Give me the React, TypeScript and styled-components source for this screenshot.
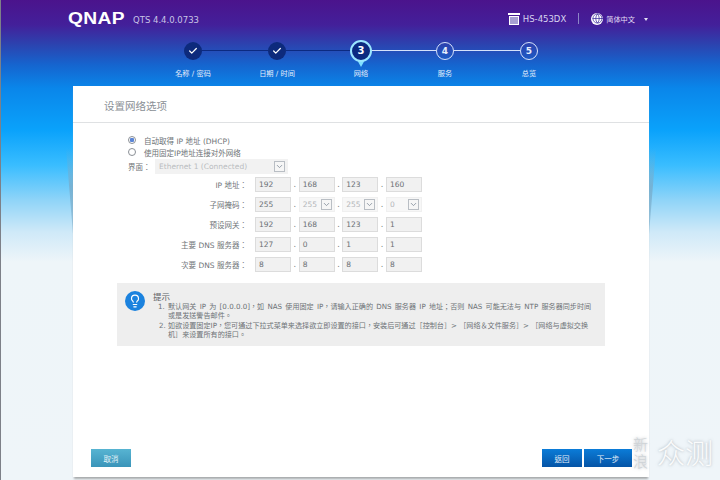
import React from 'react';
import styled, { createGlobalStyle } from 'styled-components';
import { Check, ChevronDown, Globe, Lightbulb } from 'lucide-react';

const UI_FONT = `'DejaVu Sans', 'Noto Sans CJK TC', sans-serif`;

const GlobalStyle = createGlobalStyle`
  html, body {
    margin: 0;
    padding: 0;
  }
  body {
    font-family: ${UI_FONT};
    background: #eff5f9;
  }
`;

type Octet = { value: string; select?: boolean };
type AddressRow = { label: string; octets: Octet[] };

const plain = (...values: string[]): Octet[] => values.map(value => ({ value }));

const ADDRESS_ROWS: AddressRow[] = [
  { label: 'IP 地址：', octets: plain('192', '168', '123', '160') },
  {
    label: '子网掩码：',
    octets: [
      { value: '255' },
      { value: '255', select: true },
      { value: '255', select: true },
      { value: '0', select: true },
    ],
  },
  { label: '预设网关：', octets: plain('192', '168', '123', '1') },
  { label: '主要 DNS 服务器：', octets: plain('127', '0', '1', '1') },
  { label: '次要 DNS 服务器：', octets: plain('8', '8', '8', '8') },
];

const STEPS = [
  { label: '名称 / 密码', state: 'done' },
  { label: '日期 / 时间', state: 'done' },
  { label: '网络', state: 'active' },
  { label: '服务', state: 'todo' },
  { label: '总览', state: 'todo' },
] as const;

type StepState = (typeof STEPS)[number]['state'];

const App = () => {
  return (
    <>
      <GlobalStyle />
      <Page>
        <TopBar>
          <Brand>
            <Logo>QNAP</Logo>
            <Version>QTS 4.4.0.0733</Version>
          </Brand>
          <TopRight>
            <NasIcon viewBox="0 0 12 12">
              <rect x="0" y="0" width="12" height="2" fill="#fff" />
              <path d="M1 3h10v9H1z" fill="#fff" />
              <path d="M3 4v7M5 4v7M7 4v7M9 4v7" stroke="#3a2a9c" strokeWidth="0.9" />
            </NasIcon>
            <Model>HS-453DX</Model>
            <Divider />
            <GlobeBadge>
              <Globe size={11} color="#3a2a9c" strokeWidth={1.6} />
            </GlobeBadge>
            <Language>简体中文</Language>
            <Caret />
          </TopRight>
        </TopBar>

        <Stepper>
          {STEPS.map((step, index) => (
            <Step key={step.label}>
              {index > 0 && <Connector $state={step.state} />}
              <StepSlot>
                {step.state === 'done' && (
                  <DoneDot>
                    <Check size={10} color="#fff" strokeWidth={3} />
                  </DoneDot>
                )}
                {step.state === 'active' && (
                  <ActivePin>
                    <ActiveDot>{index + 1}</ActiveDot>
                  </ActivePin>
                )}
                {step.state === 'todo' && <TodoDot>{index + 1}</TodoDot>}
              </StepSlot>
              <StepLabel>{step.label}</StepLabel>
            </Step>
          ))}
        </Stepper>

        <CardWrap>
          <Card>
            <CardTitle>设置网络选项</CardTitle>
            <CardBody>
              <RadioRow>
                <Radio $checked />
                <span>自动取得 IP 地址 (DHCP)</span>
              </RadioRow>
              <RadioRow>
                <Radio />
                <span>使用固定IP地址连接对外网络</span>
              </RadioRow>
              <InterfaceRow>
                <InterfaceLabel>界面：</InterfaceLabel>
                <InterfaceSelect>
                  <span>Ethernet 1 (Connected)</span>
                  <ChevronBox>
                    <ChevronDown size={9} color="#8a94a0" strokeWidth={2.4} />
                  </ChevronBox>
                </InterfaceSelect>
              </InterfaceRow>
              <AddressList>
                {ADDRESS_ROWS.map(row => (
                  <AddressLine key={row.label}>
                    <AddressLabel>{row.label}</AddressLabel>
                    <Octets>
                      {row.octets.map((octet, index) => (
                        <React.Fragment key={index}>
                          {index > 0 && <Dot>.</Dot>}
                          <OctetBox $select={octet.select}>
                            <span>{octet.value}</span>
                            {octet.select && (
                              <ChevronBox>
                                <ChevronDown size={9} color="#8a94a0" strokeWidth={2.4} />
                              </ChevronBox>
                            )}
                          </OctetBox>
                        </React.Fragment>
                      ))}
                    </Octets>
                  </AddressLine>
                ))}
              </AddressList>

              <Hint>
                <HintIcon>
                  <Lightbulb size={14} color="#fff" strokeWidth={2} />
                </HintIcon>
                <HintText>
                  <HintTitle>提示</HintTitle>
                  <HintList>
                    <HintItem $wordGap={1}>
                      默认网关 IP 为 [0.0.0.0]，如 NAS 使用固定 IP，请输入正确的 DNS 服务器 IP 地址；否则 NAS 可能无法与 NTP 服务器同步时间
                      <br />
                      或是发送警告邮件。
                    </HintItem>
                    <HintItem>
                      如欲设置固定IP，您可通过下拉式菜单来选择欲立即设置的接口，安装后可通过［控制台］&gt; ［网络＆文件服务］&gt; ［网络与虚拟交换
                      <br />
                      机］来设置所有的接口。
                    </HintItem>
                  </HintList>
                </HintText>
              </Hint>
            </CardBody>
            <CardFooter>
              <CancelButton>取消</CancelButton>
              <FooterRight>
                <NavButton $width={40}>返回</NavButton>
                <NavButton $width={48}>下一步</NavButton>
              </FooterRight>
            </CardFooter>
          </Card>
        </CardWrap>

        <Watermark>
          <WatermarkSmall>
            新<br />浪
          </WatermarkSmall>
          <WatermarkBig>众测</WatermarkBig>
        </Watermark>
      </Page>
    </>
  );
};

const Page = styled.div`
  position: relative;
  box-sizing: border-box;
  width: 720px;
  height: 480px;
  overflow: hidden;
  display: flex;
  flex-direction: column;
  border-left: 1px solid #7d8088;
  background: linear-gradient(
    180deg,
    #4b138c 0px,
    #43209a 25px,
    #2b44b0 45px,
    #1565cf 65px,
    #0a86ea 88px,
    #0aa2fb 130px,
    #39bdff 165px,
    #8fd4f8 200px,
    #cfe9f8 232px,
    #eef5f9 262px,
    #eff5f9 480px
  );
`;

const TopBar = styled.header`
  display: flex;
  justify-content: space-between;
  align-items: flex-start;
  height: 36px;
  padding: 12px 72px 0 67px;
  box-sizing: border-box;
  flex-shrink: 0;
`;

const Brand = styled.div`
  display: flex;
  align-items: flex-end;
  gap: 7px;
`;

const Logo = styled.span`
  display: inline-block;
  width: 58px;
  font-family: 'Liberation Sans', sans-serif;
  font-size: 16px;
  line-height: 13px;
  font-weight: 700;
  letter-spacing: 0.3px;
  color: #fff;
  transform: scaleX(1.2);
  transform-origin: left center;
`;

const Version = styled.span`
  font-size: 8.5px;
  line-height: 13px;
  color: #c9c4e6;
  margin-bottom: -2px;
`;

const TopRight = styled.div`
  display: flex;
  align-items: center;
  height: 13px;
`;

const NasIcon = styled.svg`
  width: 12px;
  height: 12px;
  margin-right: 3px;
`;

const Model = styled.span`
  font-size: 8.5px;
  color: #d8d4f0;
`;

const Divider = styled.i`
  width: 1px;
  height: 11px;
  margin: 0 12px;
  background: #8d86c6;
`;

const GlobeBadge = styled.span`
  display: flex;
  align-items: center;
  justify-content: center;
  width: 12px;
  height: 12px;
  border-radius: 50%;
  background: #fff;
`;

const Language = styled.span`
  margin-left: 3px;
  font-size: 7.2px;
  color: #e2dff4;
`;

const Caret = styled.i`
  margin: 2px 0 0 9px;
  border-left: 2.5px solid transparent;
  border-right: 2.5px solid transparent;
  border-top: 3px solid #e2dff4;
`;

const Stepper = styled.nav`
  display: grid;
  grid-template-columns: repeat(5, 84px);
  justify-content: center;
  height: 50px;
  margin-left: 1px;
  flex-shrink: 0;
`;

const Step = styled.div`
  position: relative;
  display: flex;
  flex-direction: column;
  align-items: center;
`;

const StepSlot = styled.div`
  position: relative;
  z-index: 1;
  display: flex;
  align-items: center;
  justify-content: center;
  height: 29px;
`;

const Connector = styled.i<{ $state: StepState }>`
  position: absolute;
  top: 14px;
  left: calc(-50% + 9px);
  width: calc(100% - 18px);
  height: 1px;
  border-top: 1px solid ${p => (p.$state === 'todo' ? '#d6e2fb' : '#0c2a80')};
`;

const DoneDot = styled.span`
  display: flex;
  align-items: center;
  justify-content: center;
  width: 18px;
  height: 18px;
  border-radius: 50%;
  background: #0d2a7c;
`;

const TodoDot = styled.span`
  box-sizing: border-box;
  display: flex;
  align-items: center;
  justify-content: center;
  width: 18px;
  height: 18px;
  border-radius: 50%;
  border: 1px solid #d6e2fb;
  font-size: 9px;
  font-weight: 700;
  color: #e6eefc;
`;

const ActivePin = styled.span`
  position: relative;
  display: block;
  &::after {
    content: '';
    position: absolute;
    left: 50%;
    top: 18px;
    margin-left: -5px;
    border-left: 5px solid transparent;
    border-right: 5px solid transparent;
    border-top: 9px solid #7fe0ff;
  }
`;

const ActiveDot = styled.span`
  position: relative;
  z-index: 1;
  box-sizing: border-box;
  display: flex;
  align-items: center;
  justify-content: center;
  width: 22px;
  height: 22px;
  border-radius: 50%;
  background: #0b2a80;
  border: 2px solid #9be6ff;
  font-size: 10px;
  font-weight: 700;
  color: #fff;
`;

const StepLabel = styled.span`
  margin-top: 3px;
  font-size: 7.2px;
  line-height: 11px;
  color: #e4eefb;
  white-space: nowrap;
`;

const CardWrap = styled.main`
  position: relative;
  margin-left: 72px;
  width: 576px;
  height: 391px;
  flex-shrink: 0;
  &::before,
  &::after {
    content: '';
    position: absolute;
    top: 62px;
    width: 7px;
    height: 86px;
    background: linear-gradient(180deg, rgba(120, 170, 200, 0), rgba(120, 170, 200, 0.75) 45%, rgba(120, 170, 200, 0.5));
  }
  &::before {
    left: -7px;
    clip-path: polygon(0 0, 100% 0, 100% 100%);
  }
  &::after {
    right: -7px;
    clip-path: polygon(0 0, 100% 0, 0 100%);
  }
`;

const Card = styled.section`
  position: relative;
  z-index: 1;
  display: flex;
  flex-direction: column;
  height: 100%;
  background: #fff;
  box-shadow: 0 3px 2px -1px #a8aaac;
`;

const CardTitle = styled.h1`
  margin: 0;
  height: 37px;
  box-sizing: border-box;
  padding: 12px 0 0 31px;
  border-bottom: 1px solid #dfe1e3;
  font-size: 10.5px;
  line-height: 16px;
  font-weight: 400;
  color: #8a8f95;
`;

const CardBody = styled.div`
  flex: 1;
  padding: 11px 44px 0 44px;
  font-size: 7.5px;
  color: #6f7478;
`;

const RadioRow = styled.label`
  display: flex;
  align-items: center;
  height: 12px;
  padding-left: 11px;
  gap: 8px;
  font-size: 7.5px;
  color: #6d7276;
`;

const Radio = styled.i<{ $checked?: boolean }>`
  box-sizing: border-box;
  width: 8px;
  height: 8px;
  border-radius: 50%;
  border: 1px solid #8a8f95;
  background: ${p => (p.$checked ? 'radial-gradient(circle, #5b85d6 0 2px, #fff 2.5px)' : '#fff')};
`;

const InterfaceRow = styled.div`
  display: flex;
  align-items: center;
  margin-top: 1px;
  padding-left: 11px;
`;

const InterfaceLabel = styled.span`
  width: 27px;
  color: #6f7478;
`;

const InterfaceSelect = styled.div`
  box-sizing: border-box;
  display: flex;
  align-items: center;
  justify-content: space-between;
  width: 133px;
  height: 15px;
  padding: 0 3px 0 4px;
  background: #f2f2f2;
  font-size: 7.5px;
  color: #b9bcbf;
`;

const ChevronBox = styled.i`
  box-sizing: border-box;
  display: flex;
  align-items: center;
  justify-content: center;
  width: 11px;
  height: 11px;
  border: 1px solid #b9bec4;
  background: #f6f6f6;
`;

const AddressList = styled.div`
  display: flex;
  flex-direction: column;
  gap: 5px;
  margin-top: 3px;
`;

const AddressLine = styled.div`
  display: flex;
  align-items: center;
  height: 15px;
`;

const AddressLabel = styled.span`
  width: 130px;
  margin-right: 8px;
  text-align: right;
  font-size: 7.5px;
  color: #6f7478;
  white-space: nowrap;
`;

const Octets = styled.div`
  display: flex;
  justify-content: space-between;
  align-items: center;
  width: 167px;
`;

const Dot = styled.span`
  font-size: 8px;
  color: #777;
`;

const OctetBox = styled.div<{ $select?: boolean }>`
  box-sizing: border-box;
  display: flex;
  align-items: center;
  justify-content: space-between;
  width: 36px;
  height: 15px;
  padding: 0 2px 0 3px;
  background: ${p => (p.$select ? '#f7f7f7' : '#f1f1f1')};
  border: 1px solid ${p => (p.$select ? '#f0f0f0' : '#dcdcdc')};
  font-size: 7.5px;
  color: ${p => (p.$select ? '#b3b6b9' : '#6a6f73')};
`;

const Hint = styled.aside`
  display: flex;
  gap: 8px;
  height: 63px;
  margin-top: 11px;
  padding: 8px 10px 0 8px;
  box-sizing: border-box;
  background: #eeeeee;
`;

const HintIcon = styled.span`
  flex-shrink: 0;
  display: flex;
  align-items: center;
  justify-content: center;
  width: 20px;
  height: 20px;
  border-radius: 50%;
  background: #1b82de;
`;

const HintText = styled.div`
  min-width: 0;
  margin-top: 1px;
`;

const HintTitle = styled.div`
  font-size: 8.5px;
  line-height: 10px;
  color: #5c6166;
`;

const HintList = styled.ol`
  margin: 0;
  padding: 0 0 0 15px;
  font-size: 7.1px;
  line-height: 9.4px;
  color: #6d7276;
  white-space: nowrap;
`;

const HintItem = styled.li<{ $wordGap?: number }>`
  word-spacing: ${p => p.$wordGap ?? 0}px;
`;

const CardFooter = styled.footer`
  display: flex;
  justify-content: space-between;
  padding: 0 17px 10px 18px;
`;

const FooterRight = styled.div`
  display: flex;
  gap: 2px;
`;

const CancelButton = styled.button`
  width: 40px;
  height: 18px;
  padding: 0;
  border: 0;
  background: linear-gradient(180deg, #57b4d2, #3a94b9);
  font-family: inherit;
  font-size: 7.5px;
  color: #e4f3f8;
`;

const NavButton = styled.button<{ $width: number }>`
  width: ${p => p.$width}px;
  height: 18px;
  padding: 0;
  border: 0;
  background: linear-gradient(180deg, #0b7cd8, #0554a6);
  font-family: inherit;
  font-size: 7.5px;
  color: #e6f0fa;
`;

const Watermark = styled.div`
  position: absolute;
  z-index: 2;
  right: 7px;
  bottom: 10px;
  display: flex;
  align-items: center;
  gap: 9px;
  color: rgba(255, 255, 255, 0.92);
  text-shadow: 0 0 3px rgba(110, 120, 130, 0.55);
  font-family: 'Noto Sans CJK SC', sans-serif;
  font-weight: 300;
`;

const WatermarkSmall = styled.span`
  font-size: 15px;
  line-height: 17px;
  color: rgba(205, 210, 214, 0.95);
`;

const WatermarkBig = styled.span`
  font-size: 28px;
  line-height: 36px;
`;

export default App;
